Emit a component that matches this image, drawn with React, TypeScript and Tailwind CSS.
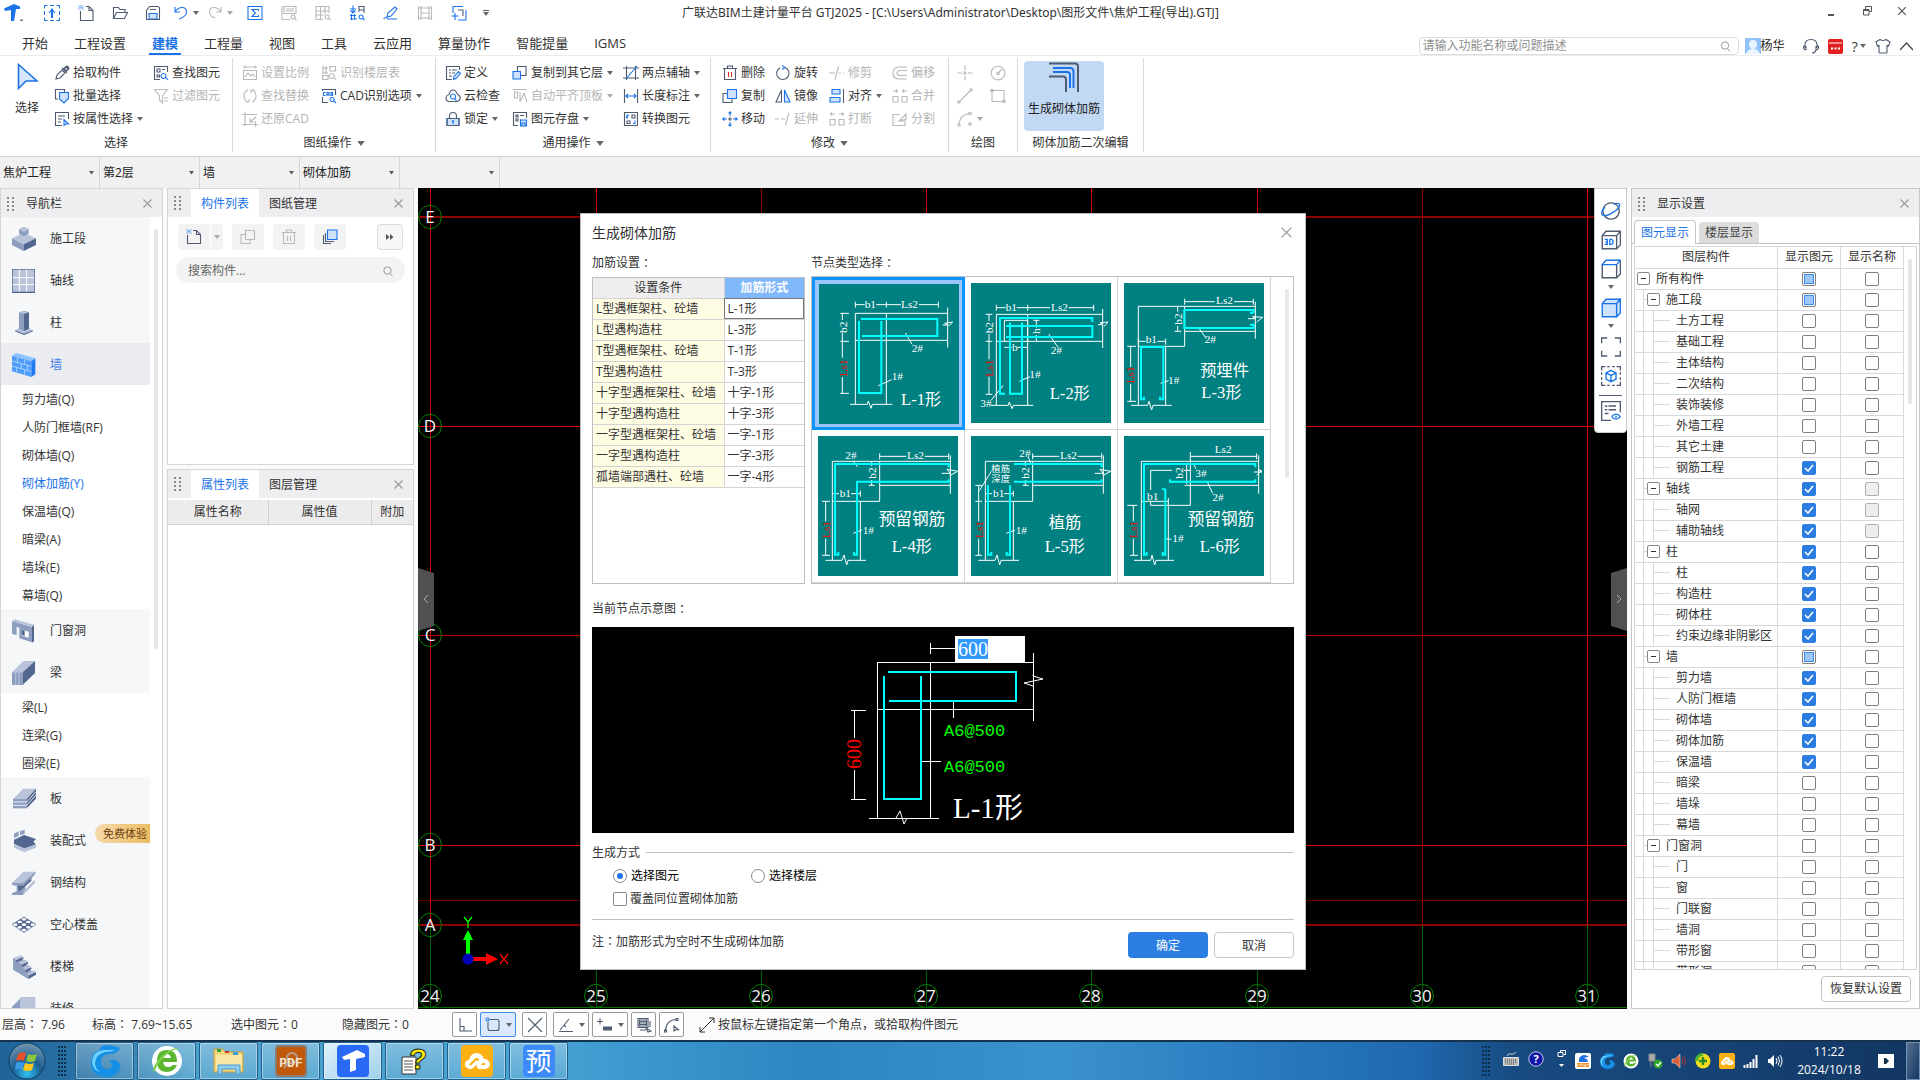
import React from 'react';

const BLUE = '#1a73e8';
const SLATE = '#4f5b70';
const PALE = '#b9b9b9';

/* ---------- small line icons, 16 x 16 grid ---------- */
type GlyphProps = { d?: string; b?: string; f?: string; s?: number; off?: boolean; r?: string };
function Glyph({ d, b, f, r, s = 16, off }: GlyphProps) {
  return (
    <svg width={s} height={s} viewBox="0 0 16 16" fill="none" strokeWidth="1.1" className="shrink-0" aria-hidden="true">
      {f && <path d={f} fill={off ? 'none' : '#cfe2fb'} stroke={off ? PALE : BLUE} />}
      {d && <path d={d} stroke={off ? PALE : SLATE} />}
      {b && <path d={b} stroke={off ? PALE : BLUE} />}
      {r && <path d={r} stroke="#d93025" />}
    </svg>
  );
}

function Caret({ big, off }: { big?: boolean; off?: boolean }) {
  return (
    <svg width={big ? 8 : 6} height={big ? 5 : 4} viewBox="0 0 6 4" className="shrink-0" aria-hidden="true">
      <path d="M0 0H6L3 4Z" fill={off ? '#aaa' : '#666'} />
    </svg>
  );
}

function Grip() {
  return (
    <svg width="7" height="14" viewBox="0 0 7 14" aria-hidden="true" className="shrink-0">
      <path d="M0 1h2M0 5h2M0 9h2M0 13h2M5 1h2M5 5h2M5 9h2M5 13h2" stroke="#8a8a8a" strokeWidth="2" />
    </svg>
  );
}

function CloseX({ s = 9 }: { s?: number }) {
  return (
    <svg width={s} height={s} viewBox="0 0 9 9" stroke="#999" strokeWidth="1.1" aria-hidden="true">
      <path d="M.5.5l8 8M8.5.5l-8 8" />
    </svg>
  );
}

/* full-width colon drawn in the middle of its cell */
function Colon() {
  return <span className="font-['Noto_Sans_CJK_TC',sans-serif]">：</span>;
}

/* ---------- title bar ---------- */
const quick: { label: string; g: GlyphProps; caret?: boolean; w: string }[] = [
  { label: '上传', g: { b: 'M.5 3.500V.5h3M6 .5h4M12.500.5h3v3M15.500 6v4M15.500 12.500v3h-3M10 15.500H6M3.500 15.500h-3v-3M.5 10V6M8 13V5M5 8l3-4 3 4M7.500 13V6M8.500 13V6' }, w: 'w-[34px]' },
  { label: '新建', g: { d: 'M8 1.500h3l4 4v10H2.500V6M11 1.500v4h4', b: 'M.5 1h1M2.500 1h1M4.500 1h1M1.500 2.500h1M3.500 2.500h1M.5 4h1M2.500 4h1M4.500 4h1' }, w: 'w-[34px]' },
  { label: '打开', g: { d: 'M1.500 13.500V2.500h5l1.500 2h5v3M1.500 13.500l3-6h11l-3 6z' }, w: 'w-[34px]' },
  { label: '保存', g: { d: 'M1.500 14.500v-9l3-4h8q2 0 2 2v11zM5 4.500h6', f: 'M4 14v-5.500h8V14z' }, w: 'w-[32px]' },
  { label: '撤销', g: { b: 'M2 2v5h5M2.500 6.500Q5 2.500 9 2.500q4.500 0 4.500 4.500T6 14' }, caret: true, w: 'w-[34px]' },
  { label: '恢复', g: { off: true, b: 'M14 2v5H9M13.500 6.500Q11 2.500 7 2.500q-4.500 0-4.500 4.500T8 13' }, caret: true, w: 'w-[34px]' },
  { label: '汇总计算', g: { b: 'M1 1.500h14v13H1zM11.500 6V4.500H5l3.500 3.500L5 11.500h6.500V10' }, w: 'w-[35px]' },
  { label: '查看', g: { off: true, d: 'M3 1.500h12v7H3zM1 1v13.500h8M5 4h8M5 6h8M12 10a2 2 0 1 0 .1 0M14 13.500l1.500 1.500' }, w: 'w-[34px]' },
  { label: '表格', g: { off: true, d: 'M1 14.500V1.500h13v7M1 6h13M1 10h8M5.500 1.500v13M10 1.500V9M1 14.500h7M12 10a2 2 0 1 0 .1 0M14 13.500l1.500 1.500' }, w: 'w-[34px]' },
  { label: '查找', g: { b: 'M1 4h6M4 .5V8M1.500 5.500L4 8l2.500-2.500M1 10.500h6M2.500 9v6M5.500 9v5M1 14h7M12 10a2 2 0 1 0 .1 0M14 13.500l1.500 1.500', d: 'M10 7V1.500h5V8M10 5h5' }, w: 'w-[34px]' },
  { label: '编辑', g: { b: 'M4 12l1-4 7-6 2 2-6 7zM.5 14Q3 11 5 14h9' }, w: 'w-[34px]' },
  { label: '钢筋', g: { off: true, d: 'M1.500 1v14M4 1v14M12 1v14M14.500 1v14M1 3h14M4 8h8M1 13h14' }, w: 'w-[34px]' },
  { label: '区域', g: { b: 'M2 8V1.500h10M15 5v10H7M.5 11h7M4 8v7', d: 'M7 5h5v6' }, w: 'w-[34px]' },
];

function TitleBar() {
  return (
    <header className="flex h-[26px] shrink-0 items-center bg-white">
      <svg width="20" height="18" viewBox="0 0 20 18" className="ml-1" aria-hidden="true">
        <path d="M0 4.500L10 0l6 2.500v2.500H12L10 17H7L7 6 1 7z" fill={BLUE} />
        <path d="M16 16l3-1v2h-3z" fill="#777" />
      </svg>
      <div className="ml-[11px] flex items-center">
        {quick.map((q) => (
          <button key={q.label} aria-label={q.label} className={`flex h-5 items-center justify-center ${q.w}`}>
            <Glyph {...q.g} />
            {q.caret && <span className="ml-1"><Caret off={q.g.off} /></span>}
          </button>
        ))}
        <button aria-label="更多" className="ml-[2px] flex w-4 flex-col items-center gap-px">
          <span className="h-px w-[6px] bg-[#555]" />
          <Caret />
        </button>
      </div>
      <h1 className="ml-[188px] font-['Noto_Sans','Noto_Sans_CJK_SC',sans-serif] text-[12px] whitespace-nowrap text-[#333]">
        广联达BIM土建计量平台 GTJ2025 - [C:\Users\Administrator\Desktop\图形文件\焦炉工程(导出).GTJ]
      </h1>
      <div className="mr-[14px] ml-auto flex items-center gap-[26px] pb-1 text-[#555]">
        <button aria-label="最小化" className="flex h-3 w-[9px] items-end"><span className="mb-px h-[2px] w-[6px] bg-[#555]" /></button>
        <button aria-label="还原"><svg width="9" height="10" viewBox="0 0 9 10" fill="none" stroke="#555"><path d="M2.500 3V.5h6v5H6M.5 3.500h5.500v5.500H.5zM.5 4.500H6" /></svg></button>
        <button aria-label="关闭"><svg width="8" height="8" viewBox="0 0 8 8" stroke="#555" strokeWidth="1.200"><path d="M0 0l8 8M8 0L0 8" /></svg></button>
      </div>
    </header>
  );
}

/* ---------- menu tabs ---------- */
const menus = ['开始', '工程设置', '建模', '工程量', '视图', '工具', '云应用', '算量协作', '智能提量', 'IGMS'];

function MenuBar() {
  return (
    <nav className="flex h-[30px] shrink-0 items-end border-b border-[#ececec] bg-white pl-[19px] text-[13px] text-[#333]">
      <div className="flex gap-[20px]">
        {menus.map((m) => (
          <button
            key={m}
            className={
              m === '建模'
                ? 'h-[23px] border-b-2 border-[#1a73e8] px-[3px] font-bold text-[#1a73e8]'
                : 'h-[23px] border-b-2 border-transparent px-[3px]'
            }
          >
            {m}
          </button>
        ))}
      </div>
      <div className="mr-[7px] ml-auto flex items-center text-[12px]">
        <label className="flex h-[18px] w-[320px] items-center rounded-sm border border-[#dedede] px-[3px]">
          <input aria-label="搜索功能" placeholder="请输入功能名称或问题描述" className="h-4 min-w-0 flex-1 text-[12px] outline-none placeholder:text-[#8f8f8f]" />
          <svg width="11" height="11" viewBox="0 0 11 11" fill="none" stroke="#999" className="mr-1"><circle cx="5" cy="4.500" r="3.700" /><path d="M7.500 7.500L10 10.500" /></svg>
        </label>
        <svg width="16" height="16" viewBox="0 0 16 16" className="ml-[6px]" aria-hidden="true">
          <rect width="16" height="16" fill="#8fc1fb" />
          <path d="M8 2q4 0 4 4 0 5-4 5T4 6q0-4 4-4zM1 16q1-4 5-5h4q4 1 5 5z" fill="#eaf4ff" />
        </svg>
        <button className="text-[#222]">杨华</button>
        <div className="ml-[18px] flex items-center gap-[9px]">
          <Glyph d="M2 10V7q0-5.500 6-5.500T14 7v3M2 7.500Q0 8 .5 10T3 11.500V8M14 7.500q2 .5 1.500 2.500T13 11.500V8M13 12q-1 3-4 3" />
          <svg width="15" height="15" viewBox="0 0 15 15" aria-hidden="true"><rect width="15" height="15" rx="2" fill="#e02020" /><path d="M1 4h13" stroke="#fff" /><path d="M3 9.500h2M6.500 9.500h2M10 9.500h2" stroke="#fff" strokeWidth="2" /></svg>
          <button aria-label="帮助" className="flex items-center gap-[2px] text-[15px] leading-4 text-[#444]">?<Caret /></button>
          <Glyph d="M5 1.500q3 2 6 0l4 2.500-1.500 4-1.500-.5V14q0 1-1 1H5q-1 0-1-1V7.500L2.500 8 1 4z" />
          <svg width="13" height="9" viewBox="0 0 13 9" fill="none" stroke="#444" strokeWidth="1.200"><path d="M0 8l6.500-7L13 8" /></svg>
        </div>
      </div>
    </nav>
  );
}

/* ---------- ribbon ---------- */
type CmdProps = { label: string; g: GlyphProps; caret?: boolean };
function Cmd({ label, g, caret }: CmdProps) {
  return (
    <button className={`flex h-[23px] items-center gap-[3px] text-[12px] whitespace-nowrap ${g.off ? 'text-[#b5b5b5]' : 'text-[#333]'}`}>
      <Glyph {...g} />
      {label}
      {caret && <span className="ml-px"><Caret off={g.off} /></span>}
    </button>
  );
}

function Group({ w, title, caret, pl, children }: { w: string; title: string; caret?: boolean; pl: string; children: React.ReactNode }) {
  return (
    <section className={`shrink-0 pt-[2px] ${w}`}>
      <div className="h-[94px] border-r border-[#d9d9d9] pt-[3px]">
        <div className={`flex h-[69px] ${pl}`}>{children}</div>
        <div className="mt-1 flex h-[18px] items-center justify-center gap-[5px] text-[12px] text-[#333]">
          {title}
          {caret && <Caret big />}
        </div>
      </div>
    </section>
  );
}

const FIND = 'M10.500 8.500a2.500 2.500 0 1 0 .1 0M13 12.500l2 2.500';

function Ribbon() {
  return (
    <div className="flex h-[100px] shrink-0 bg-white">
      <Group w="w-[233px]" title="选择" pl="">
        <button className="flex w-[54px] flex-col items-center pt-[2px] text-[12px] text-[#333]">
          <svg width="21" height="27" viewBox="0 0 21 27"><path d="M1.500 1.500L20 18H9L1.500 25.500z" fill="#d5e6fd" stroke={BLUE} strokeWidth="1.600" /></svg>
          <span className="mt-[9px]">选择</span>
        </button>
        <div className="w-[99px]">
          <Cmd label="拾取构件" g={{ d: 'M2 14l1-4 5-5 3 3-5 5zM8 3l5 5M9.500 4l3-3q2 0 2.500 2.500l-3 3zM10 4l3-2 1 1-2 3z' }} />
          <Cmd label="批量选择" g={{ d: 'M4 11H1.500v-9.500h9V4', f: 'M5.500 4.500h9v6l-4.500 4.500-4.500-4z' }} />
          <Cmd label="按属性选择" caret g={{ d: 'M8 14.500H1.500v-13h13V8M4 5h7M4 8h4M4 11h3', f: 'M10 8.500v6l2-1.500h2.500z' }} />
        </div>
        <div>
          <Cmd label="查找图元" g={{ d: 'M7 14.500H1.500v-13h13V7M4 4h3v3H4zM9 4.500h3M4 10h2.500v2H4z', b: FIND }} />
          <Cmd label="过滤图元" g={{ off: true, d: 'M1.500 1.500h13L9.500 8v7L6.500 12V8zM11 10h4M11 13h4' }} />
        </div>
      </Group>

      <Group w="w-[203px]" title="图纸操作" caret pl="pl-[9px]">
        <div className="w-[79px]">
          <Cmd label="设置比例" g={{ off: true, d: 'M1 2h14M3 .5v3M13 .5v3M1.500 5.500h13v9h-13zM3 12l3-4 3 3 2-2 2 3' }} />
          <Cmd label="查找替换" g={{ off: true, d: 'M6 2Q1.500 4 2 8.500T6 14M4 14h3v-3M10 14q4.500-2 4-6.500T10 2M12.500 2H9v3' }} />
          <Cmd label="还原CAD" g={{ off: true, d: 'M3 1v14M0 3.500h15M0 13.500h16M13.500 10v6M14 6l-6 5V7M8 11h4' }} />
        </div>
        <div>
          <Cmd label="识别楼层表" g={{ off: true, d: 'M2 1v8M5 1v8M1 3h6M1 8h6M9 1.500h5.500V6H9zM1.500 10.500v4H7v-4zM10.500 8.500a2.500 2.500 0 1 0 .1 0M13 12.500l2 2.500' }} />
          <Cmd label="CAD识别选项" caret g={{ d: 'M7 14.500H1.500V9M14.500 7V1.500h-13V3', b: 'M4.500 4.500H2.500v3h2M6 8V4.500h2V8M6 6.500h2M10 4.500h1.500v3H10zM11 9.500a2 2 0 1 0 .1 0M13 13l2 2' }} />
        </div>
      </Group>

      <Group w="w-[275px]" title="通用操作" caret pl="pl-[9px]">
        <div className="w-[67px]">
          <Cmd label="定义" g={{ d: 'M7 14.500H1.500v-13h13V5M4 5h2M7 5h5M4 8h2M7 8h3M4 11h3', f: 'M8.500 14.500l.5-3L13.500 6.500l2 2-4.500 5z' }} />
          <Cmd label="云检查" g={{ d: 'M4 13.500Q.5 13 1 9.500 1.500 7 4 6.500 5 2 8 2t4.500 4.500Q15 7 15.200 10q-.2 3-3.200 3.500z', b: 'M8 6a2.500 2.500 0 1 0 .1 0M9.500 10.500l2 2' }} />
          <Cmd label="锁定" caret g={{ f: 'M2 7.500h12v7H2z', d: 'M4.500 7.500V5q0-3.500 3.500-3.500T11.500 5v2.500M2 7.500h12v7H2z', b: 'M8 9v4M7 10h2' }} />
        </div>
        <div className="w-[111px]">
          <Cmd label="复制到其它层" caret g={{ f: 'M1 6.500h7.500v7.500H1z', d: 'M5.500 6V1.500h8.500v9H9' }} />
          <Cmd label="自动平齐顶板" caret g={{ off: true, d: 'M1 1.500h14M2.500 4v6h3V4zM8 4v10M12 5l-3.500 8M12 5l3 9' }} />
          <Cmd label="图元存盘" caret g={{ d: 'M6 14.500H1.500v-13h13V7M4 4h2v2H4zM8 4.500h4M4 8h2v2H4zM8 9h1', f: 'M8.500 9h6v6h-6z', b: 'M10 15v-3h3v3' }} />
        </div>
        <div>
          <Cmd label="两点辅轴" caret g={{ d: 'M3.500 1v14M12.500 1v14M0 3h16M0 13h16', b: 'M3 14L14 1' }} />
          <Cmd label="长度标注" caret g={{ d: 'M1.500 1v14M14.500 1v14', b: 'M3 8h10M5 6L3 8l2 2M11 6l2 2-2 2' }} />
          <Cmd label="转换图元" g={{ d: 'M1.500 1.500h13v13h-13zM9 4h3v3H9zM4 10h3v2.500H4z', b: 'M4 7V4h2M5 5.500L4 7 3 5.500M12 9.500v3h-2' }} />
        </div>
      </Group>

      <Group w="w-[238px]" title="修改" caret pl="pl-[11px]">
        <div className="w-[53px]">
          <Cmd label="删除" g={{ d: 'M1 3.500h14M5.500 3V1h5v2M2.500 4v10.500h11V4', r: 'M6.500 7v5M9.500 7v5' }} />
          <Cmd label="复制" g={{ d: 'M5 5.500H1v9h9V11', f: 'M5.500 1.500h9v9h-9z' }} />
          <Cmd label="移动" g={{ b: 'M8 1v4M8 11v4M1 8h4M11 8h4M6.500 2.500L8 .8l1.500 1.700M6.500 13.500L8 15.200l1.500-1.700M2.500 6.500L.8 8l1.700 1.500M13.500 6.500L15.200 8l-1.700 1.500', d: 'M6 8h4M8 6v4' }} />
        </div>
        <div className="w-[54px]">
          <Cmd label="旋转" g={{ d: 'M10 2.500a6.200 6.200 0 1 1-5 .3', b: 'M7 .5l3 2-3 2' }} />
          <Cmd label="镜像" g={{ d: 'M6.500 2v12H1z', f: 'M9.500 2v12H15z' }} />
          <Cmd label="延伸" g={{ off: true, d: 'M0 8h4M6 8h4M14 2l-3.500 12' }} />
        </div>
        <div className="w-[63px]">
          <Cmd label="修剪" g={{ off: true, d: 'M0 8h6M10 8h2M14 8h1M9.500 1.500L6 14.500' }} />
          <Cmd label="对齐" caret g={{ f: 'M3 1.500h8v4.500H3zM1 9.500h10v4.500H1z', d: 'M14.500 1v14' }} />
          <Cmd label="打断" g={{ off: true, d: 'M1 8.500h5v5.500H1zM10 8.500h5v5.500h-5zM2 3h4M3 1.500L1.500 3 3 4.500M10 3h4M13 1.500L14.500 3 13 4.500' }} />
        </div>
        <div>
          <Cmd label="偏移" g={{ off: true, d: 'M15 2H7Q1 2.500 1 8t6 6h8M15 5.500H8Q5 6 5 8t3 2.500h7' }} />
          <Cmd label="合并" g={{ off: true, d: 'M1 8.500h5v5.500H1zM10 8.500h5v5.500h-5zM1 3h4M4 1.500L5.500 3 4 4.500M15 3h-4M12 1.500L10.500 3 12 4.500' }} />
          <Cmd label="分割" g={{ off: true, d: 'M8 3.500H1v11h12V9M7 10l7-7v5zM8 10h4' }} />
        </div>
      </Group>

      <Group w="w-[69px]" title="绘图" pl="pl-[8px]">
        <div className="w-[33px]">
          <Cmd label="" g={{ off: true, d: 'M8 .5V5M8 11v4.500M.5 8H5M11 8h4.500M7 7h2v2H7z' }} />
          <Cmd label="" g={{ off: true, d: 'M3 13L13 3M1 13h2v2H1zM13 1h2v2h-2z' }} />
          <Cmd label="" caret g={{ off: true, d: 'M2 13Q3 4 12 2.500M1 13h2v2H1zM12 1.500h2v2h-2zM12 12h2v2h-2z' }} />
        </div>
        <div>
          <Cmd label="" g={{ off: true, d: 'M8 1.200a6.800 6.800 0 1 0 .1 0M8 8l4-4M7 7.500h2v2H7z' }} />
          <Cmd label="" g={{ off: true, d: 'M2 2.500h12v11H2zM1 1.500h2v2H1zM13 12.500h2v2h-2z' }} />
        </div>
      </Group>

      <Group w="w-[126px]" title="砌体加筋二次编辑" pl="pl-[6px]">
        <button className="flex h-[70px] w-[80px] flex-col items-center rounded bg-[#c1d9f2] pt-px text-[12px] text-[#222]">
          <svg width="30" height="30" viewBox="0 0 30 30" fill="none" strokeWidth="2" className="shrink-0">
            <path d="M0 1.500h26q3 0 3 3V30M0 14.500h14q3 0 3 3V30" stroke={SLATE} />
            <path d="M4 6h17q3.500 0 3.500 3.500V26M4 10h14q3 0 3 3v13" stroke={BLUE} />
          </svg>
          <span className="mt-2">生成砌体加筋</span>
        </button>
      </Group>
    </div>
  );
}

/* ---------- level selectors ---------- */
function Selectors() {
  return (
    <div className="flex h-8 shrink-0 border-t border-[#d4d4d4] bg-[#f1f1f1]">
      {['焦炉工程', '第2层', '墙', '砌体加筋', ''].map((v, i) => (
        <label key={i} className="flex w-[100px] items-center border-r border-[#d6d6d6] pr-[5px] pl-[3px]">
          <select aria-label={`选择${i + 1}`} className="min-w-0 flex-1 appearance-none bg-transparent text-[12px] text-[#222]">
            <option>{v}</option>
          </select>
          <svg width="5" height="4" viewBox="0 0 5 4" aria-hidden="true"><path d="M0 0h5L2.500 3.500z" fill="#555" /></svg>
        </label>
      ))}
    </div>
  );
}

/* ---------- navigation panel ---------- */
const L = '#b9c4da';
const M = '#8d9dbf';
const D = '#53668f';
const W = '#ffffff';

const navIcons: Record<string, React.ReactNode> = {
  施工段: (<><path d="M0 34L36 17l36 17-37 18z" fill={L} /><path d="M0 34l35 18v20L0 54z" fill={M} /><path d="M35 52l37-18v20L35 72z" fill={D} /><path d="M21 7l15-7 14 7v13l-14 8-15-8z" fill={M} /><path d="M21 7l15-7 14 7-14 8z" fill={L} /></>),
  轴线: (<><path d="M0 0h69v72H0z" fill={D} /><path d="M2 2h65v66H2z" fill={L} /><path d="M22 2v66M44 2v66M2 26h64M2 47h64" stroke={W} strokeWidth="3" /></>),
  柱: (<><path d="M9 58l27-14 27 14-27 13z" fill={L} /><path d="M9 58l27 10 27-10v3L36 72 9 61z" fill={D} /><path d="M21 4l15-4v60l-15-7z" fill={M} /><path d="M36 0l15 4v49l-15 7z" fill={D} /><path d="M21 4l15-4 15 4-15 5z" fill={L} /></>),
  墙: (<><path d="M0 8l12-8 58 16-12 9z" fill="#8cc4ff" /><path d="M0 8l58 17v47L0 55z" fill="#4f9dfb" /><path d="M58 25l12-9v48l-12 8z" fill="#1e7cf2" /><path d="M0 24l58 16M0 39l58 17M16 13v14M38 20v13M28 32v15M46 37v15M14 43v14M38 51v14" stroke="#b7dafd" strokeWidth="2.500" /></>),
  门窗洞: (<><path d="M0 6l8-5 58 16-6 6z" fill={L} /><path d="M0 6l60 18v46L22 58V26l-8-3v25L0 45z" fill={M} /><path d="M60 23l6-6v50l-6 4z" fill={D} /><path d="M30 32l20 6v18l-20-6z" fill={W} /><path d="M30 32l8 3v16l-8-3z" fill={D} /></>),
  梁: (<><path d="M0 34L34 0h35L32 34z" fill={L} /><path d="M0 34h32v38H0z" fill={M} /><path d="M32 34L69 0v36L32 72z" fill={D} /><path d="M11 34v38M21 34v38" stroke={L} strokeWidth="3" /></>),
  板: (<><path d="M3 36L34 5h38L44 36z" fill={L} /><path d="M3 36h41v28H3z" fill={M} /><path d="M44 36L72 5v30L44 64z" fill={D} /><path d="M3 45h41L72 14M3 55h41L72 24" stroke={W} strokeWidth="2.500" fill="none" /></>),
  装配式: (<><path d="M6 32l30-14 36 12-8 8 8 8-35 16L6 44z" fill={D} /><path d="M6 44l31 14 35-12v10L37 70 6 56z" fill={L} /><path d="M6 14l14-7v14L6 27zM24 7l14-5v12l-14 5z" fill={M} /></>),
  钢结构: (<><path d="M0 36L34 2h36L32 36z" fill={L} /><path d="M0 36h32l38-34v6L40 44v12l28-28v8L32 72H0v-5l14-6V44L0 42z" fill={M} /><path d="M18 44h16l24-22v8L20 62z" fill={D} /><path d="M34 60l34-30v6L34 68z" fill={L} /></>),
  空心楼盖: (<><path d="M0 36L36 13l36 23-36 24z" fill={M} /><path d="M0 33L36 11l36 22-36 23z" fill={D} /><g fill={W}><ellipse cx="36" cy="19" rx="7" ry="4" /><ellipse cx="23" cy="27" rx="7" ry="4" /><ellipse cx="49" cy="27" rx="7" ry="4" /><ellipse cx="10" cy="35" rx="6" ry="4" /><ellipse cx="36" cy="35" rx="7" ry="4" /><ellipse cx="62" cy="35" rx="6" ry="4" /><ellipse cx="23" cy="43" rx="7" ry="4" /><ellipse cx="49" cy="43" rx="7" ry="4" /><ellipse cx="36" cy="51" rx="7" ry="4" /></g></>),
  楼梯: (<><path d="M3 10l24-8v10l12 6v10l12 5v10l20 13-22 16L3 44z" fill={M} /><path d="M3 10L27 1l8 5-22 10zM20 22l20-8 8 5-18 10zM32 38l18-8 8 5-18 10zM44 56l22-10 6 5-22 10z" fill={L} /><path d="M12 16l22-9v6l-20 9zM28 30l20-10v6L32 36zM40 46l18-9v6l-16 9zM50 62l22-11v8L50 72z" fill={D} /></>),
  装修: (<><path d="M0 30L28 0h42v72H0z" fill={L} /><path d="M0 30L24 6v66H0z" fill={M} /></>),
};

type NavEntry = { t: string; sub?: boolean; on?: boolean; badge?: string };
const nav: NavEntry[] = [
  { t: '施工段' }, { t: '轴线' }, { t: '柱' }, { t: '墙', on: true },
  ...['剪力墙(Q)', '人防门框墙(RF)', '砌体墙(Q)'].map((t) => ({ t, sub: true })),
  { t: '砌体加筋(Y)', sub: true, on: true },
  ...['保温墙(Q)', '暗梁(A)', '墙垛(E)', '幕墙(Q)'].map((t) => ({ t, sub: true })),
  { t: '门窗洞' }, { t: '梁' },
  ...['梁(L)', '连梁(G)', '圈梁(E)'].map((t) => ({ t, sub: true })),
  { t: '板' }, { t: '装配式', badge: '免费体验' }, { t: '钢结构' }, { t: '空心楼盖' }, { t: '楼梯' }, { t: '装修' },
];

function NavPanel() {
  return (
    <aside className="flex w-[163px] shrink-0 flex-col border border-[#d5d5d5] bg-white text-[12px] text-[#333]">
      <div className="flex h-7 shrink-0 items-center bg-[#eeeef0] pt-px pr-[10px] pl-[6px]">
        <Grip />
        <h2 className="ml-[12px]">导航栏</h2>
        <button aria-label="关闭导航栏" className="ml-auto"><CloseX /></button>
      </div>
      <div className="flex min-h-0 flex-1">
        <ul className="w-[149px] overflow-hidden">
          {nav.map((n) =>
            n.sub ? (
              <li key={n.t}>
                <button className={`flex h-7 w-full items-center pt-px pl-[21px] ${n.on ? 'text-[#1a73e8]' : ''}`}>{n.t}</button>
              </li>
            ) : (
              <li key={n.t}>
                <button className={`flex h-[42px] w-full items-center pt-px pl-[11px] ${n.on ? 'bg-[#eaecf0] text-[#3f7ee8]' : 'bg-[#f5f7f9]'}`}>
                  <svg width="24" height="24" viewBox="0 0 72 72" className="shrink-0" aria-hidden="true">{navIcons[n.t]}</svg>
                  <span className="ml-[14px] whitespace-nowrap">{n.t}</span>
                  {n.badge && (
                    <span className="mb-[14px] ml-[9px] flex h-[19px] flex-1 items-center rounded-l-full bg-linear-to-r from-[#f6d9a8] to-[#ebbd62] pl-2 text-[11px] leading-[19px] whitespace-nowrap text-[#6b3d0c]">
                      {n.badge}
                    </span>
                  )}
                </button>
              </li>
            ),
          )}
        </ul>
        <div className="mt-3 ml-1 h-[420px] w-1 rounded bg-[#e6e6e6]" />
      </div>
    </aside>
  );
}

/* ---------- component and property panels ---------- */
function PanelTabs({ tabs }: { tabs: [string, string] }) {
  return (
    <div className="flex h-7 shrink-0 items-center bg-[#eeeef0] pr-[10px] pl-[6px]">
      <Grip />
      <div className="ml-[10px] flex h-full" role="tablist">
        <button role="tab" aria-selected="true" className="w-[68px] bg-white pt-px text-[#1a73e8]">{tabs[0]}</button>
        <button role="tab" aria-selected="false" className="w-[68px] pt-px">{tabs[1]}</button>
      </div>
      <button aria-label="关闭面板" className="ml-auto"><CloseX /></button>
    </div>
  );
}

function ComponentColumn() {
  return (
    <div className="flex w-[247px] shrink-0 flex-col gap-1 text-[12px] text-[#333]">
      <section className="h-[277px] shrink-0 border border-[#d5d5d5] bg-white">
        <PanelTabs tabs={['构件列表', '图纸管理']} />
        <div className="flex gap-[9px] px-[10px] pt-[7px]">
          <div className="flex gap-px">
            <button aria-label="新建构件" className="flex h-[26px] w-8 items-center justify-center rounded-l bg-[#f3f3f3]">
              <Glyph d="M7 1.500h3.500l4 4v9h-13V6M10.500 1.500v4h4" b="M.5 1h1M2.500 1h1M4.500 1h1M1.500 2.500h1M3.500 2.500h1M.5 4h1M2.500 4h1M4.500 4h1" />
            </button>
            <button aria-label="新建选项" className="flex h-[26px] w-3 items-center justify-center rounded-r bg-[#f3f3f3]"><Caret off /></button>
          </div>
          <button aria-label="复制构件" className="flex h-[26px] w-8 items-center justify-center rounded bg-[#f3f3f3]"><Glyph off d="M5 5.500H1v9h9V11M5.500 1.500h9v9h-9z" /></button>
          <button aria-label="删除构件" className="flex h-[26px] w-8 items-center justify-center rounded bg-[#f3f3f3]"><Glyph off d="M1 3.500h14M5.500 3V1h5v2M2.500 4v10.500h11V4M6.500 7v5M9.500 7v5" /></button>
          <button aria-label="层间复制" className="flex h-[26px] w-8 items-center justify-center rounded bg-[#f3f3f3]"><Glyph f="M5.500 1h9.500v9.500H5.500z" d="M3.500 4v8.500H12M1.500 6v8.500H9" /></button>
          <button aria-label="展开" className="ml-auto flex h-[26px] w-[26px] items-center justify-center rounded border border-[#dcdcdc] bg-[#f7f7f7]">
            <svg width="8" height="6" viewBox="0 0 8 6" fill="#555"><path d="M0 0l3.500 3L0 6zM4 0l3.500 3L4 6z" /></svg>
          </button>
        </div>
        <label className="mx-2 mt-[7px] flex h-[26px] items-center rounded-full bg-[#f3f3f3] px-3 pt-px">
          <input aria-label="搜索构件" placeholder="搜索构件..." className="min-w-0 flex-1 bg-transparent outline-none placeholder:text-[#666]" />
          <svg width="10" height="10" viewBox="0 0 10 10" fill="none" stroke="#999"><circle cx="4.500" cy="4.500" r="3.700" /><path d="M7 7.500L9.500 10" /></svg>
        </label>
      </section>
      <section className="min-h-0 flex-1 border border-[#d5d5d5] bg-white">
        <PanelTabs tabs={['属性列表', '图层管理']} />
        <table className="mt-[2px] w-full table-fixed border-collapse">
          <thead>
            <tr className="h-6 border-b border-[#d0d0d0] bg-[#ececec]">
              <th className="w-[100px] border-r border-[#d0d0d0] font-normal">属性名称</th>
              <th className="border-r border-[#d0d0d0] font-normal">属性值</th>
              <th className="w-[42px] font-normal">附加</th>
            </tr>
          </thead>
        </table>
      </section>
    </div>
  );
}

/* ---------- drawing canvas ---------- */
const cols: [number, string, string][] = [
  [12, '24', '#d00000'], [178, '25', '#d00000'], [343, '26', '#8b0000'], [508, '27', '#d00000'],
  [673, '28', '#d00000'], [839, '29', '#d00000'], [1004, '30', '#8b0000'], [1169, '31', '#e00000'],
];
const rowsAxis: [number, string, string][] = [
  [29, 'E', '#8b0000'], [238, 'D', '#e00000'], [447, 'C', '#c00000'], [657, 'B', '#e00000'], [737, 'A', '#8b0000'],
];

function Bubble({ x, y, n }: { x: number; y: number; n: string }) {
  return (
    <g>
      <path
        d="M-5 -10.500L0 -11.800 5 -10.500 10 -6 11.500 0 10 6 5 10.500 0 11.800 -5 10.500 -10 6 -11.500 0 -10 -6z"
        transform={`translate(${x} ${y})`}
        fill="none"
        stroke="#008200"
      />
      <text x={x} y={y + 6} textAnchor="middle" fontSize="17" fill="#f4f4f4">{n}</text>
    </g>
  );
}

function Plan() {
  return (
    <svg className="block h-full w-full" aria-label="轴网">
      {rowsAxis.map(([y, n, c]) => (
        <line key={n} x1="0" x2="100%" y1={y} y2={y} stroke={c} strokeWidth={c === '#8b0000' ? 2 : 1} shapeRendering="crispEdges" />
      ))}
      <line x1="0" x2="100%" y1="712" y2="712" stroke="#6a0000" shapeRendering="crispEdges" />
      <line x1="0" x2="100%" y1="819" y2="819" stroke="#007000" shapeRendering="crispEdges" />
      {cols.map(([x, n, c]) => (
        <g key={n} shapeRendering="crispEdges">
          <line x1={x} x2={x} y1="0" y2="737" stroke={c} />
          <line x1={x} x2={x} y1="737" y2="820" stroke="#006400" />
        </g>
      ))}
      {cols.map(([x, n]) => <Bubble key={n} x={x} y={808} n={n} />)}
      {rowsAxis.map(([y, n]) => <Bubble key={n} x={12} y={y} n={n} />)}
      <path d="M48 771V752H45L50 742 55 752H52V771z" fill="#00ff00" />
      <path d="M50 769H68V765L80 771 68 777V773H50z" fill="#ff0000" />
      <circle cx="50" cy="771" r="5.500" fill="#0000b8" />
      <path d="M46 729l4 5 4-5M50 734v6" stroke="#00ff00" fill="none" strokeWidth="1.300" />
      <path d="M82 766l8 10M90 766l-8 10" stroke="#ff0000" strokeWidth="1.300" />
    </svg>
  );
}

const viewTools: { label: string; g: GlyphProps; caret?: boolean }[] = [
  { label: '动态观察', g: { d: 'M8 1.500a6.500 6.500 0 1 0 .1 0', b: 'M3 5Q-.5 9 1 11q2 2 8-1.500T15 3q-1-2-5-.5' } },
  { label: '三维', g: { d: 'M1 4.500h11.500v10.500H1zM1 4.500L4 1h11.500l-3 3.500M15.500 1v11l-3 3', b: 'M3 7.500h2v4H3M3.500 9.500h1.500M7 7.500v4h1.500l1-1V8.500l-1-1z' } },
  { label: '俯视', g: { d: 'M1 4.500V15h11.500V4.500M15.500 1v11l-3 3', b: 'M1 4.500L4 1h11.500l-3 3.500z' }, caret: true },
  { label: '实体', g: { f: 'M1 4.500h11.500v10.500H1zM1 4.500L4 1h11.500l-3 3.500M15.500 1v11l-3 3V4.500z' }, caret: true },
  { label: '全屏', g: { d: 'M.5 5V.8H5M11 .8h4.500V5M15.500 11v4.200H11M5 15.200H.5V11' } },
  { label: '局部三维', g: { d: 'M.5 3.500V.5h3M5 .5h2M9 .5h2M12.500.5h3v3M15.500 5v2M15.500 9v2M15.500 12.500v3h-3M11 15.500H9M7 15.500H5M3.500 15.500h-3v-3M.5 11V9M.5 7V5', b: 'M8 3.500l4 2v5l-4 2-4-2v-5zM4 5.500l4 2 4-2M8 7.500v5' } },
];

function ViewTools() {
  return (
    <div className="absolute top-0 right-0 flex w-[33px] flex-col items-center rounded-b border border-[#ccc] bg-white pt-3 pb-[11px]">
      {viewTools.map((t) => (
        <button key={t.label} aria-label={t.label} className={`flex flex-col items-center ${t.caret ? 'h-[39px]' : 'h-[29px]'}`}>
          <Glyph {...t.g} s={20} />
          {t.caret && <span className="mt-[6px] leading-none"><Caret /></span>}
        </button>
      ))}
      <span className="mb-[5px] h-px w-[23px] bg-[#4f5b70]" />
      <button aria-label="显示设置"><Glyph s={20} d="M8 15.500H.5V.5h15V9M3 4h2M6 4h6M3 7h2M6 7h6M3 10h3" b="M8.500 12.500q3.500-4 7 0-3.500 4-7 0M12 11.800v1.500" /></button>
    </div>
  );
}

function Handle({ right }: { right?: boolean }) {
  return (
    <button aria-label={right ? '收起右侧' : '收起左侧'} className={right ? 'absolute top-[380px] right-0' : 'absolute top-[380px] left-0'}>
      <svg width="16" height="63" viewBox="0 0 16 63">
        <path d={right ? 'M16 0L0 5v53l16 5z' : 'M0 0l16 5v53L0 63z'} fill="#505050" />
        <path d={right ? 'M6 27l4 4-4 4' : 'M10 27l-4 4 4 4'} fill="none" stroke="#aaa" />
      </svg>
    </button>
  );
}

/* ---------- dialog ---------- */
const MONO = "'Liberation Mono','Noto Sans CJK SC',monospace";
const SERIF = "'Liberation Serif','Noto Sans CJK SC',serif";

function Tx({ x, y, s = 34, c = '#fff', rot, t }: { x: number; y: number; s?: number; c?: string; rot?: boolean; t: string }) {
  return (
    <text x={x} y={y} fontSize={s} fill={c} fontFamily={SERIF} transform={rot ? `rotate(-90 ${x} ${y})` : undefined}>{t}</text>
  );
}

/* "L-n形" caption: latin part and the larger ideograph */
function Cap({ x, y, t }: { x: number; y: number; t: string }) {
  return (
    <text x={x} y={y} fontSize="50" fill="#fff" fontFamily={SERIF}>{t}<tspan fontSize="48">形</tspan></text>
  );
}

const thumbs: { name: string; box: string; w: string; c: string; texts: React.ReactNode }[] = [
  {
    name: 'L-1形', box: '54 39 420 420',
    w: 'M163 400V127H440M256 127V400M163 208H440M440 110V230M425 162h14l-8-5 24-4-12 12M147 400h52l3-10 8 22 4-12h60M163 101h28M226 101h74M354 101h58M163 92v18M256 92v18M412 92v18M124 127v20M124 186V260M124 318V367M118 127h26M118 211h26M118 367h26M313 186l20 34M232 344l40-18',
    c: 'M180 144H409V195H183M174 150V366H241V150',
    texts: (<><Tx x={191} y={111} t="b1" /><Tx x={300} y={111} t="Ls2" /><Tx x={137} y={186} rot t="b2" /><Tx x={137} y={316} rot c="#f00" t="Ls1" /><Tx x={332} y={244} t="2#" /><Tx x={272} y={328} t="1#" /><Cap x={300} y={401} t="L-1" /></>),
  },
  {
    name: 'L-2形', box: '513 39 420 420',
    w: 'M589 406V133H908M683 133V406M589 214H908M613 151H683V214M613 151V214M908 117V234M894 164h14l-8-6 24-2-12 14M573 406h52l3-10 8 20 4-10h60M589 113h28M650 113h100M806 113h75M589 104v18M683 104v18M881 104v18M567 133v20M567 192V268M567 320V373M557 133h20M557 214h20M557 373h20M709 151v22M709 195v18M700 151h18M613 232h22M652 232h30M746 192l28 40M658 334l32-14M610 346l-36 44',
    c: 'M877 156V144H600V371H615M618 168H877V201H618M630 158V371H666V158',
    texts: (<><Tx x={617} y={122} t="b1" /><Tx x={753} y={122} t="Ls2" /><Tx x={579} y={190} rot t="b2" /><Tx x={579} y={320} rot c="#f00" t="Ls1" /><Tx x={636} y={243} t="b" /><Tx x={721} y={192} rot t="h" /><Tx x={752} y={252} t="2#" /><Tx x={688} y={325} t="1#" /><Tx x={541} y={410} t="3#" /><Cap x={749} y={386} t="L-2" /></>),
  },
  {
    name: 'L-3形', box: '972 39 420 420',
    w: 'M1015 406V109H1366M1154 109V229H1015M1097 229V406M1154 184H1366M1366 95V206M1344 146h22l-8-6 30 2-18 14M993 406h50l4-12 8 26 4-14h56M1154 95h90M1302 95h58M1154 86v18M1360 86v18M1015 214h22M1072 214h25M1015 206v18M1097 206v18M992 229v62M992 342V394M982 229h26M982 394h26M1133 109v16M1133 168v16M1124 184h20M1195 172l24 34M1082 340l24-8',
    c: 'M1361 128V120H1153V174H1361V164H1350M1361 128H1350M1032 380V388H1023V231H1090V388H1080V380',
    texts: (<><Tx x={1248} y={102} t="Ls2" /><Tx x={1037} y={218} t="b1" /><Tx x={1145} y={164} rot t="b2" /><Tx x={1003} y={340} rot c="#f00" t="Ls1" /><Tx x={1214} y={220} t="2#" /><Tx x={1104} y={341} t="1#" /><Tx x={1200} y={317} s={49} t="预埋件" /><Cap x={1204} y={384} t="L-3" /></>),
  },
  {
    name: 'L-4形', box: '54 498 420 420',
    w: 'M97 871V574H451M239 574V694H97M181 694V871M239 646H451M451 556V671M425 610h26l-10-12 32 6-22 12M76 871h50l6-16 8 30 4-14h54M239 559h80M374 559h72M239 550v18M446 550v18M97 671h20M153 671h28M181 662v18M77 694v60M77 806V856M66 694h24M66 856h24M215 574v14M215 630v16M206 646h18M160 574l12 16M160 790l26-10',
    c: 'M446 592V582H105V854H115V846M446 628V635H171V854H162V846',
    texts: (<><Tx x={136} y={566} t="2#" /><Tx x={321} y={568} t="Ls2" /><Tx x={119} y={681} t="b1" /><Tx x={227} y={626} rot t="b2" /><Tx x={90} y={804} rot c="#f00" t="Ls1" /><Tx x={188} y={791} t="1#" /><Tx x={236} y={764} s={50} t="预留钢筋" /><Cap x={275} y={847} t="L-4" /></>),
  },
  {
    name: 'L-5形', box: '513 498 420 420',
    w: 'M556 871V574H910M698 574V694H556M640 694V871M698 646H910M910 556V671M884 610h26l-10-12 32 6-22 12M535 871h50l6-16 8 30 4-14h54M698 559h80M833 559h72M698 550v18M905 550v18M556 671h20M612 671h28M640 662v18M536 646V754M536 806V856M526 646h20M526 694h20M526 856h20M676 574v14M676 630v16M668 646h18M684 560l10 24M619 790l26-10M574 604L538 662',
    c: 'M905 592V582H642M905 628V635H642M564 646V854H574V846M630 646V854H620V846',
    texts: (<><Tx x={658} y={560} t="2#" /><Tx x={780} y={568} t="Ls2" /><Tx x={579} y={681} t="b1" /><Tx x={688} y={626} rot t="b2" /><Tx x={549} y={804} rot c="#f00" t="Ls1" /><Tx x={647} y={791} t="1#" /><Tx x={574} y={607} s={28} t="植筋" /><Tx x={574} y={637} s={28} t="深度" /><Tx x={746} y={775} s={49} t="植筋" /><Cap x={734} y={847} t="L-5" /></>),
  },
  {
    name: 'L-6形', box: '972 498 420 420',
    w: 'M1024 871V574H1376M1105 684V871M1024 694H1105M1171 546V706H1052V694M1052 660V601H1116M1152 601H1171M1154 646H1376M1376 556V671M1362 606h24l-12-8 10 4-14 14M1002 871h50l4-16 8 30 4-14h54M1171 559h199M1370 550v18M1000 706v48M1000 806V856M982 706h30M990 856h24M1160 584v58M1180 582l8 14M1222 636l16 34M1096 806l18 2',
    c: 'M1366 592V582H1032V854H1040V846M1110 628V635H1366V628M1096 656V854H1088V846M1096 658H1086',
    texts: (<><Tx x={1244} y={549} t="Ls2" /><Tx x={1186} y={621} t="3#" /><Tx x={1041} y={689} t="b1" /><Tx x={1148} y={626} rot t="b2" /><Tx x={1012} y={804} rot c="#f00" t="Ls1" /><Tx x={1237} y={693} t="2#" /><Tx x={1117} y={815} t="1#" /><Tx x={1163} y={764} s={50} t="预留钢筋" /><Cap x={1199} y={847} t="L-6" /></>),
  },
];

const settings = [
  ['L型遇框架柱、砼墙', 'L-1形'], ['L型遇构造柱', 'L-3形'], ['T型遇框架柱、砼墙', 'T-1形'],
  ['T型遇构造柱', 'T-3形'], ['十字型遇框架柱、砼墙', '十字-1形'], ['十字型遇构造柱', '十字-3形'],
  ['一字型遇框架柱、砼墙', '一字-1形'], ['一字型遇构造柱', '一字-3形'], ['孤墙端部遇柱、砼墙', '一字-4形'],
];

function Preview() {
  return (
    <div className="relative h-[206px] bg-black">
      <svg width="702" height="206" viewBox="0 0 702 206" fill="none" aria-label="当前节点示意图">
        <g stroke="#fff" shapeRendering="crispEdges">
          <path d="M285.500 191V35.500H441.500M338.500 35.500V191M285.500 82.500H441.500M441.500 26V94M338.500 16v11M339 21h24M277 191.500h70" />
          <path d="M262.500 83.500V111M262.500 143V172M259 83.500h15M259 172.500h15M361.500 74V91M330 134.500h19" />
        </g>
        <path d="M441 48v1l10 3-19 4 9 3M304 191l4-7 4 13 3-6" stroke="#fff" />
        <path d="M296 45H424V74H297M292 49V172H329V49" stroke="#0ff" strokeWidth="2" shapeRendering="crispEdges" />
        <text x="352" y="109" fontSize="17" fill="#0f0" fontFamily={MONO}>A6@500</text>
        <text x="352" y="145" fontSize="17" fill="#0f0" fontFamily={MONO}>A6@500</text>
        <text x="269" y="142" fontSize="20" fill="#f00" fontFamily={SERIF} transform="rotate(-90 269 142)">600</text>
        <text x="361" y="191" fontSize="29" fill="#fff" fontFamily={SERIF}>L-1<tspan fontSize="28">形</tspan></text>
      </svg>
      <label className="absolute top-[9px] left-[363px] flex h-[26px] w-[70px] items-center bg-white pl-[3px]">
        <input aria-label="尺寸" defaultValue="600" className="h-5 w-[30px] bg-[#3399ff] font-['Liberation_Serif',serif] text-[20px] leading-5 text-white outline-none" />
      </label>
    </div>
  );
}

function Dialog() {
  return (
    <div role="dialog" aria-label="生成砌体加筋" className="absolute top-[25px] left-[162px] w-[726px] border border-[#bdbdbd] bg-white px-[11px] pb-[11px] text-[12px] text-[#333]">
      <div className="flex h-[37px] items-center pr-[2px]">
        <h2 className="text-[14px]">生成砌体加筋</h2>
        <button aria-label="关闭" className="ml-auto"><CloseX s={11} /></button>
      </div>
      <div className="flex gap-[6px]">
        <div className="w-[213px]">
          <p className="flex h-[26px] items-center pb-[2px]">加筋设置<Colon /></p>
          <div className="h-[307px] border border-[#bfbfbf]">
            <table className="w-full table-fixed border-collapse">
              <thead>
                <tr className="h-[20px]">
                  <th className="w-[131px] border-r border-b border-[#d4d4d4] bg-[#eeeeee] p-0 font-normal">设置条件</th>
                  <th className="border-b border-[#d4d4d4] bg-[#7fb8fb] p-0 font-bold text-white">加筋形式</th>
                </tr>
              </thead>
              <tbody>
                {settings.map(([a, b], i) => (
                  <tr key={a} className="h-[21px]">
                    <td className="border-r border-b border-[#d4d4d4] bg-[#fffce4] p-0 pl-[3px] whitespace-nowrap">{a}</td>
                    <td className={i === 0 ? 'border-b border-[#d4d4d4] p-0 pl-[3px] outline-1 -outline-offset-1 outline-[#777]' : 'border-b border-[#d4d4d4] p-0 pl-[3px]'}>{b}</td>
                  </tr>
                ))}
              </tbody>
            </table>
          </div>
        </div>
        <div className="min-w-0 flex-1">
          <p className="flex h-[25px] items-center pb-[2px]">节点类型选择<Colon /></p>
          <div className="flex h-[308px] justify-between border border-[#bfbfbf]">
            <div className="grid grid-cols-[153px_153px_153px] grid-rows-[153px_153px]">
              {thumbs.map((t, i) => (
                <button
                  key={t.name}
                  aria-label={t.name}
                  className={
                    i === 0
                      ? 'flex items-center justify-center border-[3px] border-[#0f93ff] bg-[#9ac6fb]'
                      : 'flex items-center justify-center border-r border-b border-[#d4d4d4]'
                  }
                >
                  <svg width="140" height="140" viewBox={t.box} fill="none" className="bg-[#008080]">
                    <path d={t.w} stroke="#fff" strokeWidth="3" />
                    <path d={t.c} stroke="#0ff" strokeWidth="6" />
                    {t.texts}
                  </svg>
                </button>
              ))}
            </div>
            <div className="mt-3 mr-1 h-[189px] w-1 rounded bg-[#e8e8e8]" />
          </div>
        </div>
      </div>
      <p className="flex h-[43px] items-center pt-[7px]">当前节点示意图<Colon /></p>
      <Preview />
      <fieldset>
        <div className="flex h-[39px] items-center gap-[6px]">
          <span>生成方式</span>
          <span className="h-px flex-1 bg-[#c0c0c0]" />
        </div>
        <div className="flex h-[8px] items-center pl-[21px] text-black">
          <label className="flex w-[138px] items-center gap-1"><input type="radio" name="mode" defaultChecked className="h-[14px] w-[14px] appearance-none rounded-full border border-[#888] bg-white p-[3px] checked:bg-[#1a73e8] checked:bg-clip-content" />选择图元</label>
          <label className="flex items-center gap-1"><input type="radio" name="mode" className="h-[14px] w-[14px] appearance-none rounded-full border border-[#888] bg-white" />选择楼层</label>
        </div>
        <label className="flex h-[38px] items-center gap-[3px] pl-[21px]"><input type="checkbox" className="h-[14px] w-[14px] appearance-none rounded-xs border border-[#888] bg-white" />覆盖同位置砌体加筋</label>
      </fieldset>
      <div className="mt-px flex h-[39px] border-t border-[#c0c0c0]">
        <p className="pt-3">注<Colon />加筋形式为空时不生成砌体加筋</p>
        <button className="mt-3 ml-auto h-[26px] w-20 rounded-sm bg-[#2b7de1] pt-px text-white">确定</button>
        <button className="mt-3 ml-[6px] h-[26px] w-20 rounded-sm border border-[#c8c8c8] bg-white pt-px">取消</button>
      </div>
    </div>
  );
}

/* ---------- display settings ---------- */
type Tri = 0 | 1 | 2 | 3; // off, on, partial, disabled
const tree: [number, string, Tri, Tri][] = [
  [0, '所有构件', 2, 0], [1, '施工段', 2, 0], [2, '土方工程', 0, 0], [2, '基础工程', 0, 0], [2, '主体结构', 0, 0],
  [2, '二次结构', 0, 0], [2, '装饰装修', 0, 0], [2, '外墙工程', 0, 0], [2, '其它土建', 0, 0], [2, '钢筋工程', 1, 0],
  [1, '轴线', 1, 3], [2, '轴网', 1, 3], [2, '辅助轴线', 1, 3],
  [1, '柱', 1, 0], [2, '柱', 1, 0], [2, '构造柱', 1, 0], [2, '砌体柱', 1, 0], [2, '约束边缘非阴影区', 1, 0],
  [1, '墙', 2, 0], [2, '剪力墙', 1, 0], [2, '人防门框墙', 1, 0], [2, '砌体墙', 1, 0], [2, '砌体加筋', 1, 0], [2, '保温墙', 1, 0],
  [2, '暗梁', 0, 0], [2, '墙垛', 0, 0], [2, '幕墙', 0, 0],
  [1, '门窗洞', 0, 0], [2, '门', 0, 0], [2, '窗', 0, 0], [2, '门联窗', 0, 0], [2, '墙洞', 0, 0], [2, '带形窗', 0, 0], [2, '带形洞', 0, 0],
];

function Tick({ v, label }: { v: Tri; label: string }) {
  return (
    <span className="grid place-items-center">
      <input
        type="checkbox"
        aria-label={label}
        defaultChecked={v === 1}
        disabled={v === 3}
        className="col-start-1 row-start-1 h-[14px] w-[14px] appearance-none rounded-xs border border-[#808080] bg-white checked:border-[#2b7de1] checked:bg-[#2b7de1] disabled:border-[#b0b0b0] disabled:bg-[#eee]"
      />
      {v === 1 && <svg width="10" height="8" viewBox="0 0 10 8" fill="none" stroke="#fff" strokeWidth="1.600" className="pointer-events-none col-start-1 row-start-1"><path d="M1 4l3 3 5-6" /></svg>}
      {v === 2 && <span className="pointer-events-none col-start-1 row-start-1 h-[10px] w-[10px] border border-[#3b8cf0] bg-[#9cc8fb]" />}
    </span>
  );
}

function Twist() {
  return (
    <button aria-label="折叠" className="flex h-[13px] w-[13px] shrink-0 items-center justify-center rounded-xs border border-[#888] bg-white">
      <span className="h-px w-[5px] bg-[#333]" />
    </button>
  );
}

function DisplayPanel() {
  return (
    <aside className="flex w-[289px] shrink-0 flex-col border border-[#c8c8c8] bg-white text-[12px] text-[#333]">
      <div className="flex h-7 shrink-0 items-center bg-[#eeeef0] pt-px pr-[10px] pl-[6px]">
        <Grip />
        <h2 className="ml-3">显示设置</h2>
        <button aria-label="关闭显示设置" className="ml-auto"><CloseX /></button>
      </div>
      <div className="flex h-[27px] shrink-0 items-end gap-[3px] border-b border-[#c4c4c4] pl-[2px]" role="tablist">
        <button role="tab" aria-selected="true" className="-mb-px h-[24px] w-[62px] rounded-t border border-b-0 border-[#c4c4c4] bg-white text-[#1a73e8]">图元显示</button>
        <button role="tab" aria-selected="false" className="h-[21px] w-[60px] rounded-t bg-[#dcdcdc] text-[#444]">楼层显示</button>
      </div>
      <div className="mx-[2px] mt-[2px] flex min-h-0 flex-1 overflow-hidden border border-[#d4d4d4]">
        <div className="min-w-0 flex-1 overflow-hidden">
          <table className="w-full table-fixed border-collapse">
            <thead>
              <tr className="h-[21px] border-b border-[#d9d9d9]">
                <th className="border-r border-[#d9d9d9] p-0 font-normal">图层构件</th>
                <th className="w-[63px] border-r border-[#d9d9d9] p-0 font-normal">显示图元</th>
                <th className="w-[63px] border-r border-[#d9d9d9] p-0 font-normal">显示名称</th>
              </tr>
            </thead>
            <tbody>
              {tree.map(([lv, t, a, b], i) => (
                <tr key={i} className="h-[21px] border-b border-[#d9d9d9]">
                  <td className="border-r border-[#d9d9d9] p-0">
                    <div className="flex h-5 items-center whitespace-nowrap">
                      {lv === 0 && <><span className="w-[2px]" /><Twist /><span className="ml-[6px]">{t}</span></>}
                      {lv === 1 && <><span className="h-full w-[9px] border-r border-[#d9d9d9]" /><span className="h-px w-[3px] bg-[#d9d9d9]" /><Twist /><span className="ml-[6px]">{t}</span></>}
                      {lv === 2 && <><span className="h-full w-[9px] border-r border-[#d9d9d9]" /><span className="h-full w-[10px] border-r border-[#d9d9d9]" /><span className="h-px w-[16px] bg-[#d9d9d9]" /><span className="ml-[6px]">{t}</span></>}
                    </div>
                  </td>
                  <td className="border-r border-[#d9d9d9] p-0"><Tick v={a} label={`${t} 显示图元`} /></td>
                  <td className="border-r border-[#d9d9d9] p-0"><Tick v={b} label={`${t} 显示名称`} /></td>
                </tr>
              ))}
            </tbody>
          </table>
        </div>
        <div className="mt-3 mr-1 ml-[4px] h-[145px] w-1 shrink-0 rounded bg-[#e6e6e6]" />
      </div>
      <div className="flex h-[38px] shrink-0 items-center justify-end pr-2">
        <button className="h-[26px] w-[90px] rounded-sm border border-[#c4c4c4] bg-white">恢复默认设置</button>
      </div>
    </aside>
  );
}

/* ---------- status bar ---------- */
const snaps: { label: string; g: GlyphProps; wide?: boolean; on?: boolean }[] = [
  { label: '正交', g: { d: 'M3 1v13h12M3 9.500h4V14' } },
  { label: '矩形', g: { d: 'M5 2.500h7q2 0 2 2v7q0 2-2 2H5q-2 0-2-2V5', b: 'M2.500 1a1.500 1.500 0 1 0 .1 0' }, wide: true, on: true },
  { label: '交点', g: { d: 'M1 1l14 14M15 1L1 15' } },
  { label: '角度', g: { d: 'M1 14.500h14M2 13L11 2M6 8l2 2' }, wide: true },
  { label: '偏移', g: { d: 'M0 4.500h6M3 1.500v6M6 10h9M6 11h9M6 12h9M6 13h9' }, wide: true },
  { label: '选择', g: { d: 'M2 1.500h10v9H2zM3.500 3h7v6h-7zM4 4.500h6M4 6h6M4 7.500h6M4 13h6M14 4v6M10 11l5 3-3 1z' } },
  { label: '弧线', g: { d: 'M1.500 14Q2 3 12 2.500M12 1.500h2v2h-2zM.5 13h2v2h-2zM10 9v5l2-1.500 2.500.2z' } },
];

function StatusBar() {
  return (
    <footer className="flex h-[31px] shrink-0 items-center bg-[#fbfbfb] text-[12px] whitespace-nowrap text-[#333]">
      <span className="w-[90px] pl-[2px]">层高<Colon /> 7.96</span>
      <span className="w-[141px] pl-[2px]">标高<Colon /> 7.69~15.65</span>
      <span className="w-[111px]">选中图元<Colon />0</span>
      <span className="w-[110px]">隐藏图元<Colon />0</span>
      <div className="flex gap-[3px]">
        {snaps.map((s) => (
          <button
            key={s.label}
            aria-label={s.label}
            className={`flex h-[25px] items-center justify-center gap-[5px] rounded-xs border ${s.wide ? 'w-9' : 'w-[25px]'} ${s.on ? 'mr-[3px] border-[#3f8ae8] bg-[#dbe9fc]' : 'border-[#9a9a9a] bg-white'} ${s.label === '交点' ? 'mr-[3px]' : ''}`}
          >
            <Glyph {...s.g} />
            {s.wide && <Caret />}
          </button>
        ))}
      </div>
      <svg width="16" height="16" viewBox="0 0 16 16" fill="none" stroke="#333" className="ml-[15px]" aria-hidden="true"><path d="M1 15L15 1M10 1h5v5M1 10v5h5" /></svg>
      <span className="ml-[3px]">按鼠标左键指定第一个角点，或拾取构件图元</span>
    </footer>
  );
}

/* ---------- taskbar ---------- */
function Swirl({ s }: { s: number }) {
  return (
    <svg width={s} height={s} viewBox="0 0 32 32" aria-hidden="true">
      <path d="M31 3Q28 9 21 9q-9 0-9 8 0 7 6 7 5 0 5-4 0-3-4-3 4-4 9-1 6 5 2 10-4 6-13 6Q2 31 2 18 2 8 10 5l3-4q10-2 18 2z" fill="#1590e6" />
      <path d="M27 5Q22 7 16 7 7 9 6 18q0 6 5 9-7-2-8-10Q4 5 16 5z" fill="#6fd0ff" />
    </svg>
  );
}
function Browser({ s }: { s: number }) {
  return (
    <svg width={s} height={s} viewBox="0 0 32 32" aria-hidden="true">
      <circle cx="16" cy="16" r="15" fill="#fff" />
      <path d="M16 5q10 0 10 12H12q1 5 5 5 3 0 5-2h4q-3 7-10 7Q6 27 6 16T16 5zm0 4q-3 0-4 4h8q-1-4-4-4z" fill="#5cb531" />
      <path d="M3 28Q0 22 10 12T29 3q-10 2-17 10T3 28z" fill="#7fd34a" />
    </svg>
  );
}
function Cloud({ s }: { s: number }) {
  return (
    <svg width={s} height={s} viewBox="0 0 32 32" aria-hidden="true">
      <rect width="32" height="32" rx="4" fill="#fbb014" />
      <path d="M9 24q-6-1-5-6 1-3 4-3 1-6 7-7 6 0 8 6 5 0 6 5 0 5-6 5h-5q-3-1-2-4l3-4h4l-3 4h4q1-2-1-2-4-1-4-1l-7 6q-2 2-3 1z" fill="#fff" />
      <path d="M9 20l6-6 3 1" fill="none" stroke="#fbb014" strokeWidth="2" />
    </svg>
  );
}

const tasks: { label: string; icon: React.ReactNode; on?: boolean }[] = [
  { label: '浏览器', icon: <Swirl s={32} /> },
  { label: '安全浏览器', icon: <Browser s={32} /> },
  {
    label: '资源管理器',
    icon: (
      <svg width="32" height="30" viewBox="0 0 32 30"><path d="M1 3h9l2 3h18v20H1z" fill="#f3d77d" stroke="#c79f3c" /><path d="M3 9h26v14H3z" fill="#fae9a6" /><path d="M4 3h4v3H4z" fill="#3a9b3a" /><path d="M12 5h4v2h-4z" fill="#c33" /><path d="M20 6h5v3h-5z" fill="#3aa0d8" /><path d="M5 28V19h22v9h-4v-5H9v5z" fill="#8fcdf0" stroke="#4a9bc9" /></svg>
    ),
  },
  {
    label: 'PDF',
    icon: (
      <svg width="32" height="32" viewBox="0 0 32 32"><rect width="32" height="32" rx="4" fill="#8c7a6c" /><rect x="2" y="2" width="28" height="28" rx="3" fill="#c05a0a" /><circle cx="17" cy="13" r="5" fill="none" stroke="#b9a08c" strokeWidth="2" /><path d="M13 17l-4 6" stroke="#b9a08c" strokeWidth="2" /><text x="16" y="22" textAnchor="middle" fontSize="13" fontWeight="bold" fill="#f3e3d5" fontFamily="'Liberation Mono',monospace">PDF</text></svg>
    ),
  },
  {
    label: 'GTJ', on: true,
    icon: (
      <svg width="32" height="32" viewBox="0 0 32 32"><rect width="32" height="32" rx="4" fill="#2a68f6" /><path d="M5 12L20 5l8 4v3l-9 2v11l-6 2V14l-6 1z" fill="#fff" /></svg>
    ),
  },
  {
    label: '帮助',
    icon: (
      <svg width="32" height="32" viewBox="0 0 32 32"><path d="M3 12h14v17H3z" fill="#fff" stroke="#333" /><path d="M5 16h9M5 19h9M5 22h9M5 25h9" stroke="#555" /><text x="10" y="24" fontSize="30" fontWeight="bold" fill="#ffee00" stroke="#222" fontFamily="'Liberation Sans',sans-serif">?</text></svg>
    ),
  },
  { label: '云盘', icon: <Cloud s={32} /> },
  { label: '预算', icon: <span className="flex h-8 w-8 items-center justify-center rounded bg-[#3d8bfa] text-[26px] leading-8 text-white">预</span> },
];

function TaskDots() {
  return (
    <svg width="9" height="30" viewBox="0 0 9 30" aria-hidden="true" className="shrink-0">
      {[0, 3, 6].map((x) => <line key={x} x1={x + 1} x2={x + 1} y1="0" y2="30" stroke="#0d2d4c" strokeWidth="2" strokeDasharray="2 2" />)}
    </svg>
  );
}

function Taskbar() {
  return (
    <div className="flex h-10 shrink-0 items-center border-t-2 border-[#16324c] bg-linear-[90deg,#1f639a_0%,#2a72a6_4%,#4a9fcb_10%,#4aa3d2_28%,#3d9ad0_32%,#2e86c0_42%,#3a92cc_55%,#2a7cc0_65%,#1f68ae_74%,#174a80_79%,#164274_90%,#123561_100%]">
      <button aria-label="开始" className="ml-2 shrink-0">
        <svg width="38" height="38" viewBox="0 0 38 38">
          <defs><radialGradient id="orb" cx="50%" cy="85%" r="80%"><stop offset="0" stopColor="#2fc0f0" /><stop offset=".5" stopColor="#1c5f94" /><stop offset="1" stopColor="#6d93ad" /></radialGradient></defs>
          <circle cx="19" cy="19" r="18" fill="url(#orb)" stroke="#0e3c5e" />
          <path d="M10 12q4-3 8-1l-2 8q-4-2-8 0z" fill="#e8502a" /><path d="M20 12q4 2 9 0l-2 7q-4 2-9 0z" fill="#8cc63f" />
          <path d="M8 21q4-2 8 0l-2 7q-4-2-7 0z" fill="#3a9be8" /><path d="M17 21q5 2 9 0l-2 7q-4 2-9 0z" fill="#fcc81e" />
        </svg>
      </button>
      <span className="ml-3"><TaskDots /></span>
      <div className="ml-2 flex h-full gap-[3px]">
        {tasks.map((t) => (
          <button
            key={t.label}
            aria-label={t.label}
            className={`flex h-full w-[59px] items-center justify-center rounded-xs border border-[#1e5f8c] inset-ring inset-ring-white/40 ${t.on ? 'bg-linear-to-br from-[#e0f2fb] to-[#9fd0ea]' : 'bg-linear-to-b from-white/30 to-white/10'}`}
          >
            {t.icon}
          </button>
        ))}
      </div>
      <div className="ml-auto flex h-full shrink-0 items-center">
        <TaskDots />
        <div className="ml-[12px] flex items-center gap-[13px]">
          <svg width="16" height="14" viewBox="0 0 16 14" className="mb-1"><path d="M.5 5.500h15v8H.5z" fill="#bbb" stroke="#ddd" /><path d="M2 8h12M2 10h12M4 12h8" stroke="#444" strokeDasharray="1 1" /><path d="M4 4q1-3 4-2t5-2" fill="none" stroke="#ccc" /></svg>
          <svg width="16" height="16" viewBox="0 0 16 16" className="-ml-1 mb-1"><circle cx="8" cy="8" r="7.200" fill="#1216a8" stroke="#c5cbe8" /><text x="8" y="12" textAnchor="middle" fontSize="11" fontWeight="bold" fill="#fff">?</text></svg>
          <svg width="10" height="18" viewBox="0 0 10 18" fill="none" stroke="#fff" className="mb-1"><path d="M3.500 2.500V.5h5v4h-2M1 2.500h5v4H1z" /><path d="M2 14h5l-2.500 3z" fill="#fff" stroke="none" /></svg>
        </div>
        <div className="ml-[8px] flex items-center gap-2">
          <svg width="16" height="16" viewBox="0 0 16 16"><rect width="16" height="16" rx="2" fill="#fff" /><path d="M4 9q-1-6 5-7 3 0 5 2-3 0-5 1 4 1 4 4z" fill="#1e6fe0" /><path d="M2 10h12v4H2z" fill="#f08a24" /><path d="M2 12h12M6 10v2M10 12v2" stroke="#fff" strokeWidth=".7" /></svg>
          <Swirl s={16} />
          <Browser s={16} />
          <svg width="16" height="16" viewBox="0 0 16 16"><path d="M2 1h6v7H2zM4 8v6" fill="#aaa" stroke="#888" /><circle cx="11" cy="11" r="4.500" fill="#2ea52e" /><path d="M9 11l2 2 3-4" fill="none" stroke="#fff" strokeWidth="1.400" /></svg>
          <svg width="16" height="16" viewBox="0 0 16 16"><path d="M1 6h3l5-5v14l-5-5H1z" fill="#d9613c" stroke="#f0d0c0" strokeWidth=".6" /><path d="M11 5q2 3 0 6M13 3q3 5 0 10" fill="none" stroke="#a33" /></svg>
          <svg width="16" height="16" viewBox="0 0 16 16"><circle cx="8" cy="8" r="7.500" fill="#f2dc1b" /><path d="M0 8a8 8 0 0 1 8-8v3a5 5 0 0 0-5 5z" fill="#4fb52e" /><path d="M8 4v8M4 8h8" stroke="#2a8a2a" strokeWidth="2.500" /></svg>
          <Cloud s={16} />
          <svg width="16" height="14" viewBox="0 0 16 14"><path d="M1.500 14v-3M4.500 14v-4M7.500 14V8M10.500 14V5M13.500 14V1" stroke="#fff" strokeWidth="2" /></svg>
          <svg width="16" height="16" viewBox="0 0 16 16"><path d="M1 6h2l4-4v12l-4-4H1z" fill="#fff" /><path d="M9 5q2 3 0 6M11 3.500q3 4.500 0 9M13 2q4 6 0 12" fill="none" stroke="#fff" /></svg>
        </div>
        <div className="ml-3 w-[68px] text-center text-[12px] leading-[18px] text-white">
          <div>11:22</div>
          <div>2024/10/18</div>
        </div>
        <svg width="16" height="14" viewBox="0 0 16 14" className="ml-[15px]"><rect width="16" height="14" fill="#fff" /><path d="M6 4h2l3 3-3 3H6z" fill="#16324c" /></svg>
        <button aria-label="显示桌面" className="ml-3 h-full w-[14px] border border-[#6f92b4] bg-linear-to-br from-white/30 to-transparent" />
      </div>
    </div>
  );
}

export default function App() {
  return (
    <div className="flex h-screen flex-col overflow-hidden bg-[#fbfbfb] font-['Open_Sans','Noto_Sans_CJK_SC',sans-serif] leading-[18px]">
      <TitleBar />
      <MenuBar />
      <Ribbon />
      <Selectors />
      <main className="flex min-h-0 flex-1 gap-1">
        <NavPanel />
        <ComponentColumn />
        <div className="relative min-w-0 flex-1 overflow-hidden bg-black">
          <Plan />
          <Handle />
          <Handle right />
          <ViewTools />
          <Dialog />
        </div>
        <DisplayPanel />
      </main>
      <StatusBar />
      <Taskbar />
    </div>
  );
}
